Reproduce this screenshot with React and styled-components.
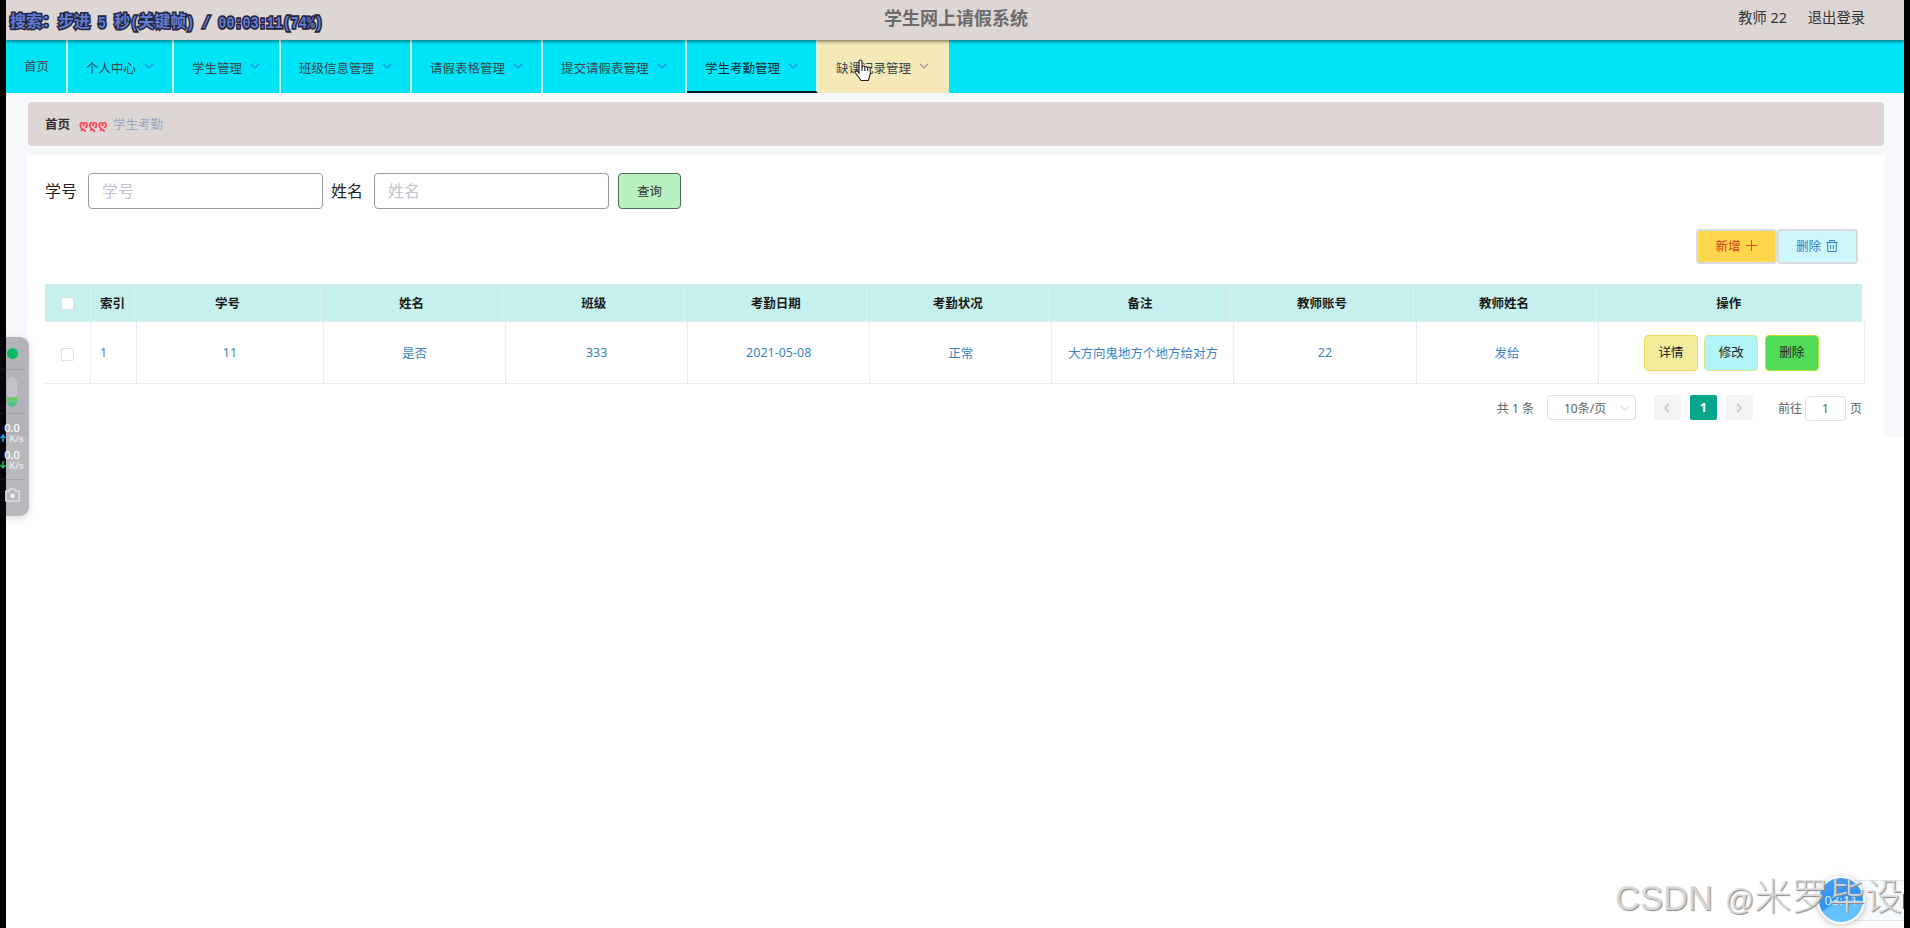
import styled, { createGlobalStyle } from 'styled-components'

const GlobalStyle = createGlobalStyle`
* {
    box-sizing: border-box;
}
body {
    margin: 0;
    background: #fff;
    overflow: hidden;
    font-family: "Noto Sans", "Noto Sans CJK SC", sans-serif;
    font-size: 12.5px;
}
input, button {
    font-family: inherit;
}
`

const Page = styled.div`
position: relative;
width: 1910px;
height: 928px;
border-left: 6px solid #000;
border-right: 6px solid #000;
overflow: hidden;
`

const TopBar = styled.header`
position: relative;
z-index: 1;
display: grid;
grid-template-columns: 1fr auto 1fr;
align-items: center;
height: 40px;
padding: 0 39px 4px 0;
background: #ded6d4;
box-shadow: 0 1px 4px rgba(0, 0, 0, 0.6);
`

const Title = styled.h1`
grid-column: 2;
margin: 0 0 0 41px;
font-size: 18px;
font-weight: 700;
line-height: 24px;
color: #6c6a6a;
`

const UserArea = styled.div`
display: flex;
justify-content: flex-end;
gap: 21px;
font-size: 14.3px;
line-height: 20px;
color: #333;
`

const Nav = styled.nav`
display: flex;
height: 53px;
background: #00e4f8;
`

const NavItem = styled.div`
display: flex;
align-items: center;
width: ${props => props.$width}px;
padding: ${props => props.$plain ? '0 0 2px 18px' : props.$active ? '4px 0 0 18px' : '2px 0 0 18px'};
border-right: 2px solid #d3fbff;
border-bottom: ${props => props.$active ? '2px solid #001a20' : '0'};
background: ${props => props.$hover ? '#f5e9b8' : 'transparent'};
color: ${props => props.$active ? '#10282c' : '#37474b'};
white-space: nowrap;

&:last-child {
    border-right: 0;
}
svg {
    margin: -4px 0 0 8px;
    color: ${props => props.$hover ? '#9a90b0' : '#1b8fe0'};
}
`

const Content = styled.main`
height: 344px;
padding: 9px 20px 0 22px;
background: #f6f8fb;
`

const Breadcrumb = styled.div`
display: flex;
align-items: center;
height: 44px;
padding: 0 17px 1px;
border-radius: 3px;
background: #ded6d4;
color: #99a9bf;

b {
    font-weight: 700;
    color: #303133;
}
span {
    width: 27px;
    margin: 2px 7px 0 9px;
    font-family: "DejaVu Sans", sans-serif;
    font-size: 11.6px;
    font-weight: 700;
    white-space: nowrap;
    color: #fb4659;
}
`

const Card = styled.section`
height: 282px;
margin-top: 9px;
padding: 18px 19px 0 17px;
background: #fff;
`

const SearchForm = styled.form`
display: flex;
align-items: center;
height: 36px;
font-size: 16px;
color: #222;

label {
    width: 43px;
    line-height: 24px;
}
`

const Input = styled.input`
width: 235px;
height: 36px;
margin-right: 8px;
padding: 0 13px;
border: 1px solid #999;
border-radius: 4px;
font-size: 16px;
outline: none;

&::placeholder {
    color: #c0c4cc;
}
`

const SearchButton = styled.button`
width: 63px;
height: 36px;
margin-left: 1px;
padding: 0 0 2px;
border: 1px solid #4c6b55;
border-radius: 4px;
background: #b9f2c0;
font-size: 12.5px;
color: #333;
`

const Actions = styled.div`
display: flex;
justify-content: flex-end;
margin: 20px 7px 0 0;
`

const ActionButton = styled.button`
display: flex;
align-items: center;
justify-content: center;
gap: 5px;
width: 81px;
height: 35px;
padding: 0 1px 2px 0;
border: 2px solid #d8dce0;
border-radius: 4px;
background: ${props => props.$bg};
font-size: 12.5px;
color: ${props => props.$color};
`

const Table = styled.div`
margin: 20px 0 0;
width: 1820px;
`

const HeadRow = styled.div`
display: grid;
grid-template-columns: 46px 44px 186px repeat(7, 182.1px) 1fr;
width: 1817px;
height: 38px;
border-bottom: 1px solid #ddf1f1;
background: #c5f0ee;
font-weight: 700;
color: #1a1a1a;
`

const BodyRow = styled.div`
display: grid;
grid-template-columns: 46px 46px 187px repeat(7, 182.1px) 1fr;
height: 62px;
border-bottom: 1px solid #e8ebf2;
color: #3a82c4;
`

const Cell = styled.div`
display: flex;
align-items: center;
justify-content: ${props => props.$left ? 'flex-start' : 'center'};
padding: ${props => props.$left ? '0 0 0 9px' : '0'};
border-right: 1px solid #e8ebf2;
white-space: nowrap;

${HeadRow} & {
    border-color: #d8f2f3;
    padding-bottom: 1px;
}
${HeadRow} &:last-child {
    border: 0;
}
`

const Check = styled.span`
width: 13px;
height: 13px;
margin-top: 3px;
border: 1px solid #dcdfe6;
border-radius: 2px;
background: #fff;
`

const RowButton = styled.button`
width: 54px;
height: 36px;
margin: 0 3.2px;
padding: 0 0 2px;
border: 1.5px solid ${props => props.$border};
border-radius: 4px;
background: ${props => props.$bg};
font-size: 12.5px;
color: #222;
`

const Pager = styled.div`
display: flex;
align-items: center;
height: 25px;
margin: 11px 3px 0 0;
justify-content: flex-end;
font-size: 12px;
color: #606266;
`

const SizeSelect = styled.div`
display: flex;
align-items: center;
justify-content: space-between;
width: 89px;
height: 25px;
margin: 0 18px 0 13px;
padding: 1px 6px 0 16px;
border: 1px solid #dcdfe6;
border-radius: 3px;
color: #606266;

svg {
    color: #c0c4cc;
}
`

const PageButton = styled.span`
display: flex;
align-items: center;
justify-content: center;
width: 27px;
height: 25px;
margin-right: 9px;
border-radius: 2px;
background: ${props => props.$current ? '#05a58b' : '#f4f4f5'};
font-weight: 700;
color: ${props => props.$current ? '#fff' : '#c0c4cc'};
`

const JumpLabel = styled.span`
margin-left: 16px;
`

const JumpBox = styled.span`
display: flex;
align-items: center;
justify-content: center;
width: 41px;
height: 25px;
margin: 1px 4px 0 3px;
border: 1px solid #dcdfe6;
border-radius: 4px;
`

const SeekInfo = styled.div`
position: absolute;
z-index: 3;
left: 4px;
top: 9px;
font-family: "Noto Sans CJK SC", sans-serif;
font-size: 16px;
font-weight: 700;
line-height: 22px;
white-space: pre;
color: #6279d6;
-webkit-text-stroke: 3px #23273d;
paint-order: stroke fill;

span {
    display: inline-block;
    font-family: "Liberation Mono", monospace;
    font-size: 13.4px;
    transform: scaleY(1.2);
}
`

const Monitor = styled.aside`
position: absolute;
z-index: 3;
left: 0;
top: 337px;
width: 29px;
height: 179px;
border-radius: 0 9px 9px 0;
background: rgba(22, 24, 36, 0.3);
box-shadow: 0 2px 8px rgba(0, 0, 0, 0.15);
`

const MonitorPart = styled.div`
display: flex;
flex-direction: column;
align-items: center;
justify-content: center;
width: 25px;
height: ${props => props.$height}px;
padding-bottom: ${props => props.$last ? '4px' : '0'};
border-bottom: ${props => props.$last ? '0' : '1px solid rgba(80, 85, 100, 0.2)'};
`

const Dot = styled.i`
width: 11px;
height: 11px;
margin-right: 1px;
border-radius: 50%;
background: #08bd61;
`

const Meter = styled.i`
width: 10px;
height: 30px;
margin-right: 1px;
border-radius: 5px;
background: linear-gradient(#c0c3c8 0 66%, #7cca63 66%, #43c1a2);
`

const Speed = styled.div`
position: relative;
top: 2px;
height: 27px;
margin-right: 1px;
font-size: 11px;
font-weight: 500;
line-height: 11px;
color: #fff;
text-align: center;

small {
    display: flex;
    align-items: center;
    gap: 3px;
    font-size: 9.5px;
    line-height: 11px;
    color: #e9ebef;
}
`

const Pointer = styled.svg`
position: absolute;
z-index: 4;
left: 848px;
top: 59px;
`

const Recorder = styled.div`
position: absolute;
right: 0;
top: 880px;
width: 62px;
height: 41px;
border: 1px solid #dce8f2;
border-right: 0;
background: #f7fafc;
`

const RecorderMark = styled.i`
position: absolute;
right: 0;
top: 13px;
width: 1px;
height: 15px;
background: #d83b3b;
`

const RecorderTime = styled.div`
position: absolute;
left: -26px;
top: -5px;
display: flex;
align-items: center;
justify-content: center;
width: 48px;
height: 48px;
border: 2px solid #f4faff;
border-radius: 50%;
background: radial-gradient(circle at 75% 150%, #63c1ff 0 58%, #2e91f0 61%, #4b9ff5 100%);
box-shadow: 0 1px 6px rgba(0, 0, 0, 0.25);
font-size: 13px;
color: #d8ecff;
`

const Watermark = styled.div`
position: absolute;
z-index: 5;
left: 1609px;
top: 869px;
display: flex;
align-items: baseline;
font-family: "Liberation Sans", sans-serif;
font-size: 34.5px;
line-height: 50px;
white-space: nowrap;
color: rgba(222, 222, 222, 0.9);
text-shadow: 1px 1px 1px #888;
`

const At = styled.span`
margin-left: 12px;
font-size: 29px;
`

const Author = styled.span`
font-family: "Noto Sans CJK SC", sans-serif;
font-size: 37px;
font-weight: 300;
`

const Chevron = ({ size = 10, d = 'M1 3l4 4 4-4', width = 1 }) => (
    <svg width={size} height={size} viewBox="0 0 10 10" fill="none" stroke="currentColor" strokeWidth={width}>
        <path d={d} />
    </svg>
)

const menus = [
    { name: '个人中心', width: 106 },
    { name: '学生管理', width: 107 },
    { name: '班级信息管理', width: 131 },
    { name: '请假表格管理', width: 131 },
    { name: '提交请假表管理', width: 144 },
    { name: '学生考勤管理', width: 131, active: true },
    { name: '缺课记录管理', width: 131, hover: true },
]

const heads = ['学号', '姓名', '班级', '考勤日期', '考勤状况', '备注', '教师账号', '教师姓名', '操作']
const record = ['11', '是否', '333', '2021-05-08', '正常', '大方向鬼地方个地方给对方', '22', '发给']

function SpeedLine({ color, up }) {
    return (
        <Speed>
            0.0
            <small>
                <svg width="6" height="8" viewBox="0 0 6 8" fill="none" stroke={color} strokeWidth="1.5">
                    <path d={up ? 'M3 8V1M.5 4L3 1.2 5.5 4' : 'M3 0v7M.5 4L3 6.8 5.5 4'} />
                </svg>
                K/s
            </small>
        </Speed>
    )
}

function App() {
    return (
        <>
        <GlobalStyle />
        <Page>
            <TopBar>
                <Title>学生网上请假系统</Title>
                <UserArea>
                    <span>教师 22</span>
                    <span>退出登录</span>
                </UserArea>
            </TopBar>

            <Nav>
                <NavItem $width={62} $plain>首页</NavItem>
                {menus.map(menu => (
                    <NavItem key={menu.name} $width={menu.width} $active={menu.active} $hover={menu.hover}>
                        {menu.name}
                        <Chevron width={1.2} />
                    </NavItem>
                ))}
            </Nav>

            <Content>
                <Breadcrumb><b>首页</b><span>ღღღ</span>学生考勤</Breadcrumb>
                <Card>
                    <SearchForm>
                        <label>学号</label>
                        <Input placeholder="学号" />
                        <label>姓名</label>
                        <Input placeholder="姓名" />
                        <SearchButton type="button">查询</SearchButton>
                    </SearchForm>

                    <Actions>
                        <ActionButton $bg="#fdd64b" $color="#d0401c">
                            新增
                            <Chevron size={11} d="M5 0v10M0 5h10" width={0.8} />
                        </ActionButton>
                        <ActionButton $bg="#cff8fa" $color="#2c7bd0">
                            删除
                            <svg width="12" height="12" viewBox="0 0 12 12" fill="none" stroke="currentColor" strokeWidth="1">
                                <path d="M.5 2.5h11M3.5 2.5v-2h5v2M1.7 2.5v9h8.6v-9M4.6 5v4M7.4 5v4" />
                            </svg>
                        </ActionButton>
                    </Actions>

                    <Table>
                        <HeadRow>
                            <Cell><Check /></Cell>
                            <Cell>索引</Cell>
                            {heads.map(head => <Cell key={head}>{head}</Cell>)}
                        </HeadRow>
                        <BodyRow>
                            <Cell><Check /></Cell>
                            <Cell $left>1</Cell>
                            {record.map(value => <Cell key={value}>{value}</Cell>)}
                            <Cell>
                                <RowButton $bg="#f3ec9c" $border="#e9dd58">详情</RowButton>
                                <RowButton $bg="#b1f5f6" $border="#d9e884">修改</RowButton>
                                <RowButton $bg="#51dc58" $border="#b8e634">删除</RowButton>
                            </Cell>
                        </BodyRow>
                    </Table>

                    <Pager>
                        共 1 条
                        <SizeSelect>10条/页 <Chevron size={9} /></SizeSelect>
                        <PageButton><Chevron d="M7 1L3 5l4 4" width={1.4} /></PageButton>
                        <PageButton $current>1</PageButton>
                        <PageButton><Chevron d="M3 1l4 4-4 4" width={1.4} /></PageButton>
                        <JumpLabel>前往</JumpLabel>
                        <JumpBox>1</JumpBox>
                        页
                    </Pager>
                </Card>
            </Content>

            <SeekInfo>搜索：步进<span> 5 </span>秒<span>(</span>关键帧<span>) / 00:03:11(74%)</span></SeekInfo>

            <Pointer width="19" height="23" viewBox="0 0 19 23" fill="#fff" stroke="#222" strokeWidth="1.1">
                <path d="M5 14V2.5C5 .4 8 .4 8 2.5V8c0-1.3 2.8-1.3 2.8.4 0-1.3 2.8-1 2.8.6 0-1.2 2.6-.9 2.6.8V15l-1.8 6.5H7.2L1.5 14c-1-1.7.9-2.7 2-1.4z" />
                <path d="M8 8v4M10.8 8.5V12M13.6 9v3" />
            </Pointer>

            <Recorder>
                <RecorderMark />
                <RecorderTime>03:11</RecorderTime>
            </Recorder>

            <Watermark>CSDN<At>@</At><Author>米罗毕设</Author></Watermark>
        </Page>
        <Monitor>
            <MonitorPart $height={33}><Dot /></MonitorPart>
            <MonitorPart $height={44}><Meter /></MonitorPart>
            <MonitorPart $height={66}>
                <SpeedLine color="#1ea7f5" up />
                <SpeedLine color="#0fbf62" />
            </MonitorPart>
            <MonitorPart $height={34} $last>
                <svg width="15" height="14" viewBox="0 0 15 14" fill="none" stroke="#eceef0" strokeWidth="1.2">
                    <path d="M.8 3h3l1.5-2h4.4l1.5 2h3v10H.8z" />
                    <circle cx="7.5" cy="7.7" r="1.6" fill="#fff" />
                </svg>
            </MonitorPart>
        </Monitor>
        </>
    )
}

export default App
